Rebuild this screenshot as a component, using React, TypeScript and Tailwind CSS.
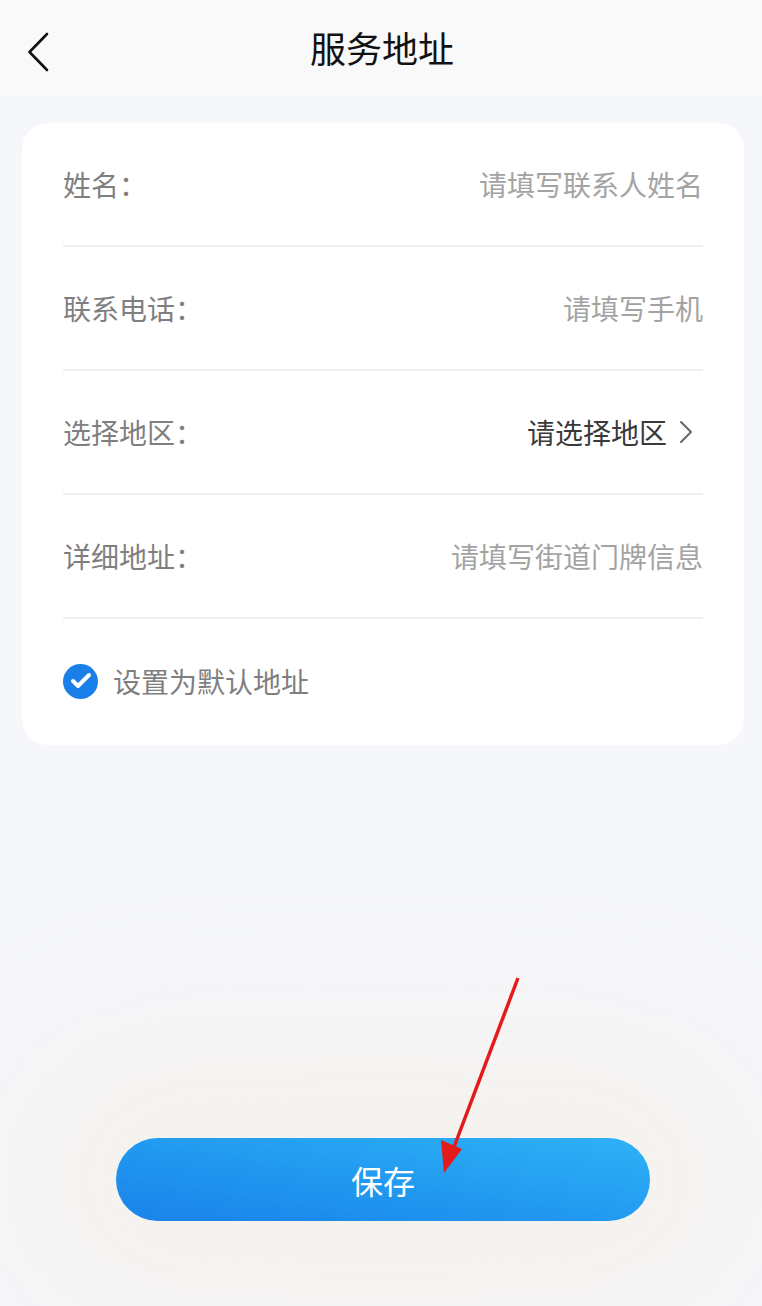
import { Check } from "lucide-react";

const rows = [
  { label: "姓名：", placeholder: "请填写联系人姓名" },
  { label: "联系电话：", placeholder: "请填写手机" },
  { label: "选择地区：", value: "请选择地区", select: true },
  { label: "详细地址：", placeholder: "请填写街道门牌信息" },
];

export default function App() {
  return (
    <div
      className="relative min-h-[1306px] w-[762px] bg-[#f6f7fb] overflow-hidden"
      style={{ fontFamily: '"Noto Sans CJK SC", "Noto Sans", sans-serif' }}
    >
      {/* header */}
      <div className="relative flex h-[96px] items-center justify-center bg-[#f9f9fa]">
        <button className="absolute left-[22px] top-[27px] p-1">
          <svg width="24" height="42" viewBox="0 0 24 42" fill="none">
            <path d="M21 3 L3.5 21 L21 39" stroke="#111" strokeWidth="2.6" strokeLinecap="round" strokeLinejoin="round" />
          </svg>
        </button>
        <h1 className="pl-[2px] pb-[2px] text-[36px] leading-none text-[#111]">服务地址</h1>
      </div>

      {/* form card */}
      <div className="ml-[22px] mr-[18px] mt-[27px] rounded-[26px] bg-white px-[41px]">
        {rows.map((row) => (
          <div
            key={row.label}
            className="flex h-[124px] items-center justify-between border-b-2 border-[#f0f0f2] text-[28px] leading-none"
          >
            <span className="text-[#7f7f7f]">{row.label}</span>
            {row.select ? (
              <span className="flex items-center gap-[12px] pr-[10px] text-[#3a3a3a]">
                {row.value}
                <svg width="14" height="24" viewBox="0 0 14 24" fill="none">
                  <path d="M2 2 L12 12 L2 22" stroke="#666" strokeWidth="2" strokeLinecap="round" strokeLinejoin="round" />
                </svg>
              </span>
            ) : (
              <span className="text-[#a3a3a3]">{row.placeholder}</span>
            )}
          </div>
        ))}
        <div className="flex h-[126px] items-center gap-[15px] pb-[2px]">
          <span className="flex h-[35px] w-[35px] items-center justify-center rounded-full bg-[#1a7fe8]">
            <Check className="h-[24px] w-[24px] text-white" strokeWidth={4} />
          </span>
          <span className="text-[28px] leading-none text-[#7f7f7f]">设置为默认地址</span>
        </div>
      </div>

      {/* save button */}
      <div className="mt-[393px] flex justify-center pl-[4px]">
        <button className="h-[83px] w-[534px] rounded-full bg-gradient-to-tr from-[#1a82ea] to-[#2eb2f6] text-[32px] text-white shadow-[0_0_160px_90px_rgba(245,236,220,0.45)]">
          保存
        </button>
      </div>

      {/* annotation arrow */}
      <svg className="pointer-events-none absolute left-0 top-0" width="762" height="1306" viewBox="0 0 762 1306">
        <line x1="518" y1="978" x2="451" y2="1155" stroke="#e31b1b" strokeWidth="3.5" />
        <polygon points="441,1140 462,1149 444,1173" fill="#e31b1b" />
      </svg>
    </div>
  );
}
